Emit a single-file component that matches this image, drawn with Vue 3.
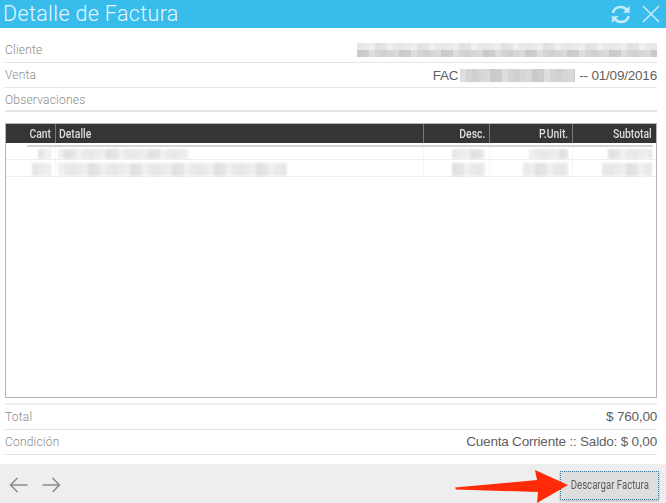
<script setup>
const columns = [
  { key: 'cant', label: 'Cant' },
  { key: 'detalle', label: 'Detalle' },
  { key: 'desc', label: 'Desc.' },
  { key: 'unit', label: 'P.Unit.' },
  { key: 'sub', label: 'Subtotal' },
]
const light = ['#e9e9e9', '#e4e4e4', '#eeeeee', '#e7e7e7', '#f0f0f0', '#e1e1e1', '#ebebeb']
const dark = ['#d4d4d4', '#cdcdcd', '#d9d9d9', '#d0d0d0', '#dedede', '#cacaca', '#d6d6d6']
const mosaic = (total, seed, tones = light) => {
  const cells = []
  let used = 0
  let i = seed
  while (used < total) {
    const w = Math.min(6 + ((i * 5) % 5), total - used)
    cells.push({ w, c: tones[i % tones.length] })
    used += w
    i += 3
  }
  return cells
}
const rows = [
  { cells: [13, 130, 33, 39, 44] },
  { cells: [19, 229, 33, 45, 50] },
]
</script>

<template>
  <div class="win">
    <header class="head">
      <h1>Detalle de Factura</h1>
      <div class="head-icons">
        <svg width="20" height="19" viewBox="0 0 20 19" fill="none" stroke="#c4ebfa" stroke-width="2.6">
          <path d="M2 8 C2.6 4.4 6 2 9.7 2 C12.6 2 14.7 3.2 16.2 5.4" />
          <path d="M17.6 11 C17 14.6 13.6 17 9.9 17 C7 17 4.9 15.8 3.4 13.6" />
          <path d="M18.4 1.6 V7.6 H12.6 Z" fill="#c4ebfa" stroke-width="0.6" />
          <path d="M1.2 17.4 V11.4 H7 Z" fill="#c4ebfa" stroke-width="0.6" />
        </svg>
        <svg width="18" height="18" viewBox="0 0 18 18" fill="none" stroke="#d3f0fb" stroke-width="1.4">
          <path d="M1 1 L17 17 M17 1 L1 17" />
        </svg>
      </div>
    </header>

    <section class="fields">
      <div class="field">
        <span class="label">Cliente</span>
        <div class="blur-val">
          <div class="mos"><i v-for="(m, i) in mosaic(300, 3)" :key="i" :style="{ width: m.w + 'px', background: m.c }"></i></div>
          <div class="mos"><i v-for="(m, i) in mosaic(300, 5, dark)" :key="i" :style="{ width: m.w + 'px', background: m.c }"></i></div>
        </div>
      </div>
      <div class="field">
        <span class="label">Venta</span>
        <span class="value fac">
          <span>FAC</span>
          <span class="mos inline"><i v-for="(m, i) in mosaic(115, 4, dark)" :key="i" :style="{ width: m.w + 'px', background: m.c }"></i></span>
          <span>-- 01/09/2016</span>
        </span>
      </div>
      <div class="field"><span class="label">Observaciones</span></div>
    </section>

    <div class="grid-box">
      <div class="grid-row head-row">
        <div v-for="c in columns" :key="c.key" class="cell" :class="c.key"><span class="cond">{{ c.label }}</span></div>
      </div>
      <div v-for="(r, ri) in rows" :key="ri" class="grid-row body-row" :class="{ first: ri === 0 }">
        <div v-for="(c, ci) in columns" :key="c.key" class="cell" :class="c.key">
          <div class="mos">
            <i v-for="(m, i) in mosaic(r.cells[ci], ci + ri * 2 + 1)" :key="i" :style="{ width: m.w + 'px', background: m.c }"></i>
          </div>
        </div>
      </div>
      <div class="strip"></div>
    </div>

    <section class="fields totals">
      <div class="field"><span class="label">Total</span><span class="value">$ 760,00</span></div>
      <div class="field"><span class="label">Condición</span><span class="value">Cuenta Corriente :: Saldo: $ 0,00</span></div>
    </section>

    <footer class="foot">
      <div class="nav">
        <svg width="19" height="16" viewBox="0 0 19 16" fill="none" stroke="#8a8a8a" stroke-width="1.5">
          <path d="M18.5 8 H1.5 M8.5 1 L1.5 8 L8.5 15" />
        </svg>
        <svg width="19" height="16" viewBox="0 0 19 16" fill="none" stroke="#8a8a8a" stroke-width="1.5">
          <path d="M0.5 8 H17.5 M10.5 1 L17.5 8 L10.5 15" />
        </svg>
      </div>
      <button class="dl"><span class="cond">Descargar Factura</span></button>
      <svg class="arrow" width="114" height="33" viewBox="0 0 114 33">
        <path d="M0 17.5 L82 10 L80 0 L113 15 L82 33 L83 22 L1 19.5 Z" fill="#ff2a08" />
      </svg>
    </footer>
  </div>
</template>

<style scoped>
.win {
  position: relative;
  width: 666px;
  height: 503px;
  display: flex;
  flex-direction: column;
  background: #fff;
  font-family: Roboto, "Liberation Sans", sans-serif;
  overflow: hidden;
}
.head {
  height: 28px;
  background: #38bcec;
  display: flex;
  align-items: center;
  justify-content: space-between;
  padding: 0 6px 0 3px;
  flex: none;
}
h1 {
  margin: 0;
  font-size: 21.5px;
  font-weight: 300;
  color: #e6f7fd;
  letter-spacing: 0.35px;
  line-height: 28px;
}
.head-icons {
  display: flex;
  align-items: center;
  gap: 11px;
}
.fields {
  margin: 10px 9px 0 5px;
  flex: none;
}
.field {
  height: 25px;
  box-sizing: border-box;
  border-bottom: 1px solid #e4e4e4;
  display: flex;
  align-items: center;
  justify-content: space-between;
  font-size: 12px;
}
.fields:not(.totals) .field:last-child { height: 24px; border-bottom-width: 2px; padding-top: 1px; }
.label {
  color: #8b8b8b;
  font-weight: 300;
  letter-spacing: 0.2px;
}
.value {
  color: #5f5f5f;
  font-size: 13.5px;
  font-weight: 400;
  font-family: "Liberation Sans", sans-serif;
  letter-spacing: -0.2px;
}
.totals .field { padding-bottom: 1px; }
.fac {
  display: flex;
  align-items: center;
}
.blur-val {
  display: flex;
  flex-direction: column;
  align-items: flex-end;
  width: 300px;
}
.mos {
  display: flex;
  height: 7px;
  filter: blur(0.7px);
}
.mos i { display: block; height: 100%; flex: none; }
.mos.inline { height: 13px; margin: 0 4px 0 2px; }
.grid-box {
  position: relative;
  margin: 11px 9px 0 5px;
  height: 275px;
  box-sizing: border-box;
  border: 1px solid #b5b5b5;
  flex: none;
}
.grid-row {
  display: grid;
  grid-template-columns: 49px 368px 66px 83px 84px;
}
.head-row {
  height: 19px;
  background: #353535;
  color: #dedede;
  font-size: 12.5px;
  font-weight: 500;
}
.head-row .cell {
  display: flex;
  align-items: center;
  justify-content: flex-end;
  border-left: 1px solid #777;
  padding: 0 4px;
  box-sizing: border-box;
}
.head-row .cell:first-child { border-left: 0; }
.head-row .detalle { justify-content: flex-start; padding-left: 3px; }
.cond {
  display: inline-block;
  transform: scaleX(0.83);
  transform-origin: right center;
  white-space: nowrap;
}
.head-row .detalle .cond { transform-origin: left center; }
.body-row {
  height: 17px;
  border-bottom: 1px solid #eee;
  box-sizing: border-box;
}
.body-row .cell {
  display: flex;
  align-items: center;
  justify-content: flex-end;
  border-left: 1px solid #f6f6f6;
  padding: 2px 4px 0;
  box-sizing: border-box;
}
.body-row .cell:first-child { border-left: 0; }
.body-row .detalle { justify-content: flex-start; padding-left: 2px; }
.body-row .mos { height: 13px; filter: blur(1px); }
.body-row.first .mos { height: 10px; margin-top: 3px; }
.strip {
  position: absolute;
  left: 21px;
  right: 3px;
  top: 21px;
  height: 2px;
  background: #d4d4d4;
  filter: blur(0.5px);
}
.totals {
  margin-top: 5px;
  border-top: 2px solid #eee;
}
.foot {
  position: relative;
  margin-top: auto;
  height: 39px;
  background: #eee;
  display: flex;
  align-items: center;
  justify-content: space-between;
  padding: 0 7px 0 9px;
  flex: none;
}
.nav {
  display: flex;
  gap: 14px;
  padding-top: 3px;
}
.nav svg { display: block; }
.dl {
  width: 99px;
  height: 29px;
  box-sizing: border-box;
  border: 1px dotted #3b7a9c;
  background: #dedede;
  color: #5c5c5c;
  font-family: Roboto, sans-serif;
  font-size: 12px;
  padding: 0;
  box-shadow: 0 1px 2px rgba(0,0,0,0.25);
  margin-top: 3px;
  display: flex;
  align-items: center;
  justify-content: center;
}
.dl .cond { transform-origin: center; transform: scaleX(0.8); }
.arrow {
  position: absolute;
  left: 455px;
  top: 6px;
}
</style>
